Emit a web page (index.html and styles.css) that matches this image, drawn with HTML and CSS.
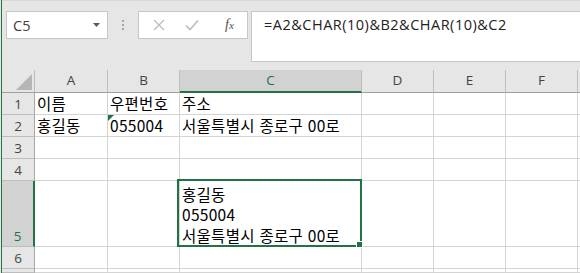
FILE: index.html
```html
<!DOCTYPE html>
<html lang="ko">
<head>
  <meta charset="UTF-8" />
  <title>Sheet</title>
  <link rel="stylesheet" href="styles.css">
</head>
<body>
  <div class="app">

    <div class="toolbar">
      <div class="namebox">
        <span>C5</span>
        <svg class="caret" width="8" height="5" viewBox="0 0 8 5"><path d="M0 0H7L3.5 4Z" fill="#5a5a5a"/></svg>
      </div>
      <svg class="grip" width="2" height="10" viewBox="0 0 2 10">
        <rect x="0" y="0" width="2" height="2" fill="#a6a6a6"/>
        <rect x="0" y="4" width="2" height="2" fill="#a6a6a6"/>
        <rect x="0" y="8" width="2" height="2" fill="#a6a6a6"/>
      </svg>
      <div class="fx-buttons">
        <svg width="12" height="12" viewBox="0 0 12 12"><path d="M1 1L11 11M11 1L1 11" stroke="#bdbdbd" stroke-width="1.4" fill="none"/></svg>
        <svg width="14" height="12" viewBox="0 0 14 12"><path d="M1 6.5L5 10.5L13 1.5" stroke="#bdbdbd" stroke-width="1.6" fill="none"/></svg>
        <span class="fx">f<span>x</span></span>
      </div>
      <div class="formula">=A2&amp;CHAR(10)&amp;B2&amp;CHAR(10)&amp;C2</div>
    </div>

    <div class="sheet">
      <!-- header row -->
      <div class="hd corner"><svg width="16" height="16" viewBox="0 0 16 16"><path d="M16 0V16H0Z" fill="#b5b5b5"/></svg></div>
      <div class="hd col">A</div>
      <div class="hd col">B</div>
      <div class="hd col active">C</div>
      <div class="hd col">D</div>
      <div class="hd col">E</div>
      <div class="hd col">F</div>
      <div class="hd col"></div>

      <!-- row 1 -->
      <div class="hd row">1</div>
      <div class="cell">이름</div>
      <div class="cell">우편번호</div>
      <div class="cell">주소</div>
      <div class="cell"></div><div class="cell"></div><div class="cell"></div><div class="cell"></div>

      <!-- row 2 -->
      <div class="hd row">2</div>
      <div class="cell">홍길동</div>
      <div class="cell flagged">055004</div>
      <div class="cell">서울특별시 종로구 00로</div>
      <div class="cell"></div><div class="cell"></div><div class="cell"></div><div class="cell"></div>

      <!-- row 3 -->
      <div class="hd row">3</div>
      <div class="cell"></div><div class="cell"></div><div class="cell"></div>
      <div class="cell"></div><div class="cell"></div><div class="cell"></div><div class="cell"></div>

      <!-- row 4 -->
      <div class="hd row">4</div>
      <div class="cell"></div><div class="cell"></div><div class="cell"></div>
      <div class="cell"></div><div class="cell"></div><div class="cell"></div><div class="cell"></div>

      <!-- row 5 -->
      <div class="hd row active">5</div>
      <div class="cell"></div>
      <div class="cell"></div>
      <div class="cell wrap selected">
        <span>홍길동</span>
        <span>055004</span>
        <span>서울특별시 종로구 00로</span>
        <i class="handle"></i>
      </div>
      <div class="cell"></div><div class="cell"></div><div class="cell"></div><div class="cell"></div>

      <!-- row 6 -->
      <div class="hd row">6</div>
      <div class="cell"></div><div class="cell"></div><div class="cell"></div>
      <div class="cell"></div><div class="cell"></div><div class="cell"></div><div class="cell"></div>

      <!-- row 7 -->
      <div class="hd row"></div>
      <div class="cell"></div><div class="cell"></div><div class="cell"></div>
      <div class="cell"></div><div class="cell"></div><div class="cell"></div><div class="cell"></div>
    </div>

  </div>
</body>
</html>
```

FILE: styles.css
```css
html, body { margin: 0; padding: 0; }
body {
  width: 580px;
  height: 273px;
  overflow: hidden;
  background: #e6e6e6;
  font-family: "Noto Sans CJK KR", "Noto Sans", sans-serif;
}
.app {
  margin-left: 1px;
  border-left: 1px solid #217346;
  height: 273px;
}

/* formula bar */
.toolbar {
  height: 70px;
  box-sizing: border-box;
  padding: 11px 0 0 4px;
  display: flex;
  align-items: flex-start;
  border-top: 1px solid #d8d8d8;
}
.namebox {
  width: 102px;
  height: 28px;
  box-sizing: border-box;
  margin-top: -1px;
  background: #fff;
  border: 1px solid #c6c6c6;
  display: flex;
  align-items: center;
  justify-content: space-between;
  padding: 0 6px 0 6px;
  font-family: "Open Sans", sans-serif;
  font-size: 14.5px;
  color: #3c3c3c;
}
.caret { margin-top: 1px; }
.grip { margin: 8px 14px 0 14px; }
.fx-buttons {
  width: 110px;
  height: 28px;
  box-sizing: border-box;
  margin-top: -1px;
  background: #fff;
  border: 1px solid #c6c6c6;
  display: flex;
  align-items: center;
  padding-left: 14px;
  gap: 20px;
}
.fx {
  font-family: "Liberation Serif", serif;
  font-style: italic;
  font-size: 14px;
  color: #505050;
  margin-left: 6px;
}
.fx span { font-size: 11px; }
.formula {
  flex: 1;
  height: 51px;
  box-sizing: border-box;
  margin: -1px 0 0 3px;
  background: #fff;
  border: 1px solid #c6c6c6;
  border-right: none;
  padding: 3px 0 0 12px;
  font-family: "Open Sans", sans-serif;
  font-size: 14.5px;
  color: #222;
  letter-spacing: 0.5px;
}

/* grid */
.sheet {
  display: grid;
  grid-template-columns: 33px 73px 72px 182px 72px 72px 72px 1fr;
  grid-template-rows: 23px 22px 22px 22px 22px 66px 22px 1fr;
  background: #fff;
  height: 203px;
}
.hd, .cell {
  box-sizing: border-box;
  border-right: 1px solid #d4d4d4;
  border-bottom: 1px solid #d4d4d4;
}
.hd {
  background: #e6e6e6;
  font-family: "Open Sans", sans-serif;
  font-size: 13.5px;
  color: #444;
  display: flex;
  justify-content: center;
  align-items: center;
}
.hd.col {
  border-right-color: #bdbdbd;
  border-bottom: 1px solid #9f9f9f;
  padding-bottom: 2px;
}
.hd.row { border-right-color: #a8a8a8; border-bottom-color: #bdbdbd; padding-top: 1px; }
.hd.corner {
  border-right-color: #bdbdbd;
  border-bottom: 1px solid #9f9f9f;
  align-items: flex-end;
  justify-content: flex-end;
  padding: 0 2px 2px 0;
}
.hd.col.active {
  background: #d2d2d2;
  border-bottom: 2px solid #217346;
  color: #217346;
}
.hd.row.active {
  background: #d2d2d2;
  border-right: 2px solid #217346;
  color: #217346;
  align-items: flex-end;
  padding-bottom: 1px;
}
.cell {
  position: relative;
  font-size: 15.5px;
  letter-spacing: 0.3px;
  line-height: 21px;
  color: #000;
  padding: 0 2px;
  white-space: nowrap;
}
/* green error marker on number-as-text */
.cell.flagged::before {
  content: "";
  position: absolute;
  left: 0;
  top: 0;
  border-top: 6px solid #217346;
  border-right: 6px solid transparent;
}
.cell.wrap {
  display: flex;
  flex-direction: column;
  justify-content: flex-end;
  line-height: 20.5px;
  padding-bottom: 1px;
}
.cell.selected::after {
  content: "";
  position: absolute;
  left: -3px;
  top: -2px;
  right: -1px;
  bottom: -1px;
  border: 2px solid #217346;
}
.handle {
  position: absolute;
  right: -2px;
  bottom: -2px;
  width: 5px;
  height: 5px;
  background: #217346;
  border: 1px solid #fff;
  z-index: 2;
}
```
